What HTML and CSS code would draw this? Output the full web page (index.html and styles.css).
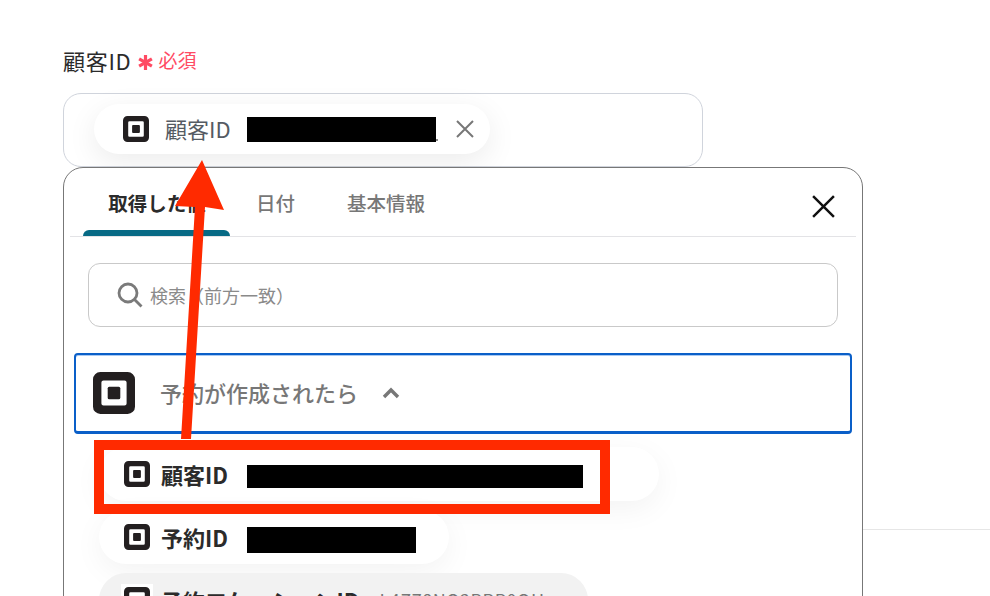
FILE: index.html
```html
<!DOCTYPE html>
<html lang="ja">
<head>
  <meta charset="UTF-8" />
  <title>顧客ID</title>
  <link rel="stylesheet" href="styles.css">
</head>
<body>
  <div class="page">
    <div class="rule"></div>

    <div class="label-row">
      <span class="label">顧客ID</span>
      <svg class="star" viewBox="0 0 16 16"><path d="M8 1V15M2 4.5 14 11.5M14 4.5 2 11.5"/></svg>
      <span class="required">必須</span>
    </div>

    <div class="field">
      <div class="chip">
        <svg class="logo logo-26" viewBox="0 0 40 40"><use href="#square-logo"></use></svg>
        <span class="chip-name">顧客ID</span>
        <span class="redact redact-chip"></span>
        <svg class="chip-close" viewBox="0 0 18 18"><path d="M1 1 17 17M17 1 1 17"/></svg>
      </div>
    </div>

    <div class="panel">
      <div class="tabs">
        <div class="tab tab-active">取得した値</div>
        <div class="tab tab-date">日付</div>
        <div class="tab tab-basic">基本情報</div>
        <svg class="panel-close" viewBox="0 0 24 24"><path d="M2 2 22 22M22 2 2 22"/></svg>
      </div>

      <div class="search">
        <svg class="search-icon" viewBox="0 0 26 26"><circle cx="11" cy="11" r="9"/><path d="M17.5 17.5 24.5 24.5"/></svg>
        <span>検索（前方一致）</span>
      </div>

      <div class="accordion">
        <svg class="logo logo-42" viewBox="0 0 40 40"><use href="#square-logo"></use></svg>
        <span class="accordion-title">予約が作成されたら</span>
        <svg class="chevron" viewBox="0 0 18 12"><path d="M2 10 9 3 16 10"/></svg>
      </div>

      <div class="pills">
        <div class="pill pill-first">
          <svg class="logo logo-26" viewBox="0 0 40 40"><use href="#square-logo"></use></svg>
          <span class="pill-name">顧客ID</span>
          <span class="redact redact-long"></span>
        </div>
        <div class="pill pill-second">
          <svg class="logo logo-26" viewBox="0 0 40 40"><use href="#square-logo"></use></svg>
          <span class="pill-name">予約ID</span>
          <span class="redact redact-short"></span>
        </div>
        <div class="pill pill-third">
          <svg class="logo logo-26" viewBox="0 0 40 40"><use href="#square-logo"></use></svg>
          <span class="pill-name">予約ロケーションID</span>
          <span class="pill-value">L4Z78NQ2PBP0QH</span>
        </div>
      </div>
    </div>

    <!-- annotations drawn over the screenshot -->
    <div class="red-box"></div>
    <svg class="arrow" viewBox="0 0 990 596"><polygon points="181,439 191,439 205,207 224,210 202,160 175,206 195,207"/></svg>

    <svg class="defs" width="0" height="0">
      <symbol id="square-logo" viewBox="0 0 40 40">
        <path fill-rule="evenodd" fill="#231f20" d="M7 0H33A7 7 0 0 1 40 7V33A7 7 0 0 1 33 40H7A7 7 0 0 1 0 33V7A7 7 0 0 1 7 0ZM10 8A2 2 0 0 0 8 10V30A2 2 0 0 0 10 32H30A2 2 0 0 0 32 30V10A2 2 0 0 0 30 8Z"/>
        <rect x="14" y="14" width="12" height="12" rx="1.5" fill="#231f20"/>
      </symbol>
    </svg>
  </div>
</body>
</html>
```

FILE: styles.css
```css
* {
  box-sizing: border-box;
}
html,
body {
  margin: 0;
  height: 100%;
  background: #fff;
}
body {
  font-family: "Noto Sans CJK JP", "Noto Sans", sans-serif;
  color: #2b2b2b;
}
.page {
  position: relative;
  width: 990px;
  height: 596px;
  overflow: hidden;
  padding: 46px 0 0 63px;
}
.rule {
  position: absolute;
  top: 529px;
  left: 863px;
  width: 127px;
  height: 1px;
  background: #e6e6e6;
}
.label-row {
  display: flex;
  align-items: center;
  height: 30px;
}
.label {
  font-size: 22px;
  line-height: 30px;
  letter-spacing: 0.7px;
  margin-bottom: 2px;
}
.star {
  margin-left: 6px;
  width: 17px;
  height: 17px;
  margin-top: 3px;
  fill: none;
  stroke: #ff4b63;
  stroke-width: 3;
}
.required {
  margin-left: 4px;
  margin-bottom: 2px;
  font-size: 19px;
  line-height: 30px;
  color: #ff4b63;
}
.field {
  width: 640px;
  height: 74px;
  margin-top: 17px;
  padding: 10px 0 0 30px;
  border: 1px solid #d0d4dc;
  border-radius: 18px;
}
.chip {
  display: flex;
  align-items: center;
  width: 396px;
  height: 50px;
  padding-left: 29px;
  background: #fff;
  border-radius: 25px;
  box-shadow: 0 8px 30px rgba(0, 0, 0, 0.08);
}
.logo {
  flex: none;
}
.logo-26 {
  width: 26px;
  height: 26px;
}
.logo-42 {
  width: 42px;
  height: 42px;
}
.chip-name {
  margin: 0 0 2px 16px;
  width: 82px;
  font-size: 22px;
  color: #555b63;
  white-space: nowrap;
}
.redact {
  display: block;
  flex: none;
  background: #000;
}
.redact-chip {
  position: relative;
  width: 189px;
  height: 25px;
}
/* tail of the value that the black bar leaves visible */
.redact-chip::after {
  content: "";
  position: absolute;
  right: -2px;
  bottom: 1px;
  width: 2px;
  height: 2px;
  background: #888;
}
.chip-close {
  width: 18px;
  height: 18px;
  margin-left: 20px;
  fill: none;
  stroke: #777;
  stroke-width: 2;
}
.panel {
  position: relative;
  width: 800px;
  height: 500px;
  border: 1px solid #777;
  border-radius: 20px;
  background: #fff;
  padding: 0 10px;
}
.tabs {
  display: flex;
  position: relative;
  height: 69px;
  margin: 0 -4px;
  border-bottom: 1px solid #e3e3e6;
}
.tab {
  font-size: 19.5px;
  font-weight: 500;
  line-height: 70px;
  color: #777;
  white-space: nowrap;
}
.tab-active {
  position: relative;
  width: 147px;
  margin-left: 13px;
  padding-left: 1px;
  text-align: center;
  color: #2b2b2b;
  font-weight: 700;
}
.tab-active::after {
  content: "";
  position: absolute;
  left: 0;
  right: 0;
  bottom: 0;
  height: 6px;
  background: #076a85;
  border-radius: 6px 6px 0 0;
}
.tab-date {
  margin-left: 26px;
}
.tab-basic {
  margin-left: 52px;
}
.panel-close {
  position: absolute;
  top: 26px;
  right: 20px;
  width: 25px;
  height: 25px;
  fill: none;
  stroke: #111;
  stroke-width: 2.4;
}
.search {
  display: flex;
  align-items: center;
  width: 750px;
  height: 64px;
  margin: 26px 0 0 14px;
  padding-left: 28px;
  border: 1px solid #c9c9c9;
  border-radius: 12px;
  font-size: 18px;
  color: #8a8a8a;
}
.search-icon {
  width: 26px;
  height: 26px;
  margin-right: 7px;
  fill: none;
  stroke: #7a7a7a;
  stroke-width: 2.8;
}
.accordion {
  display: flex;
  align-items: center;
  width: 778px;
  height: 81px;
  margin-top: 26px;
  padding-left: 17px;
  border: 2px solid #0a5fc8;
  border-bottom-width: 3px;
  border-radius: 4px;
  box-shadow: inset 0 1px 0 #a9c9f2;
}
.accordion-title {
  margin: 0 0 2px 25px;
  font-size: 22px;
  font-weight: 500;
  color: #777;
  white-space: nowrap;
}
.chevron {
  width: 18px;
  height: 12px;
  margin-left: 24px;
  fill: none;
  stroke: #777;
  stroke-width: 3.4;
}
.pills {
  display: flex;
  flex-direction: column;
  align-items: flex-start;
  gap: 9px;
  margin: 13px 0 0 25px;
}
.pill {
  display: flex;
  align-items: center;
  height: 54px;
  padding-left: 25px;
  border-radius: 27px;
  background: #fff;
  box-shadow: 0 8px 30px rgba(0, 0, 0, 0.05);
}
.pill-first {
  width: 560px;
}
.pill-second {
  width: 350px;
}
.pill-third {
  width: 489px;
  background: #f2f2f2;
  box-shadow: none;
}
.pill-third .logo {
  background: #fff;
  box-shadow: 0 0 0 3px #fff;
}
.pill-name {
  margin-left: 11px;
  width: 75px;
  font-size: 22px;
  font-weight: 700;
  color: #2b2b2b;
  white-space: nowrap;
}
.pill-third .pill-name {
  width: auto;
}
.pill-value {
  margin-left: 20px;
  font-size: 18px;
  letter-spacing: 0.5px;
  color: #777;
  white-space: nowrap;
}
.redact-long {
  margin: 5px 0 0 11px;
  width: 336px;
  height: 23px;
}
.redact-short {
  margin: 6px 0 0 11px;
  width: 169px;
  height: 26px;
}
.red-box {
  position: absolute;
  top: 440px;
  left: 94px;
  width: 516px;
  height: 74px;
  border: 10px solid #ff2a00;
}
.arrow {
  position: absolute;
  top: 0;
  left: 0;
  width: 990px;
  height: 596px;
  fill: #ff2a00;
}
.defs {
  position: absolute;
}
```
